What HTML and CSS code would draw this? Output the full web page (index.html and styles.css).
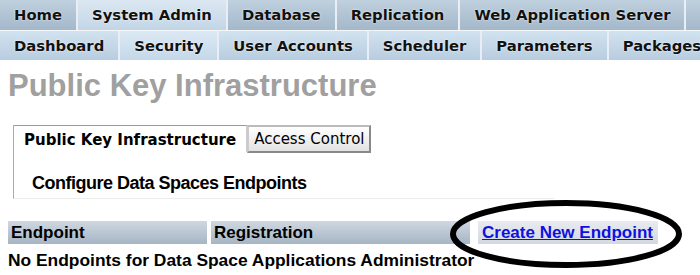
FILE: index.html
```html
<!DOCTYPE html>
<html lang="en">
<head>
  <meta charset="UTF-8">
  <title>Public Key Infrastructure</title>
  <link rel="stylesheet" href="styles.css">
</head>
<body>
  <div class="nav nav-main">
    <div class="tab">Home</div>
    <div class="tab active">System Admin</div>
    <div class="tab">Database</div>
    <div class="tab">Replication</div>
    <div class="tab">Web Application Server</div>
    <div class="tab tab-more"></div>
  </div>
  <div class="nav nav-sub">
    <div class="tab">Dashboard</div>
    <div class="tab active">Security</div>
    <div class="tab">User Accounts</div>
    <div class="tab">Scheduler</div>
    <div class="tab">Parameters</div>
    <div class="tab">Packages</div>
  </div>

  <div class="content">
    <h1 class="page-title">Public Key Infrastructure</h1>

    <div class="panel">
      <div class="panel-tabs">
        <div class="ptab ptab-on">Public Key Infrastructure</div>
        <div class="ptab ptab-off">Access Control</div>
      </div>
      <div class="panel-body">Configure Data Spaces Endpoints</div>
    </div>

    <div class="grid-head">
      <div class="col col-endpoint">Endpoint</div>
      <div class="col col-reg">Registration</div>
      <div class="col col-action"><a href="#">Create New Endpoint</a></div>
      <!-- hand-drawn marker around the link -->
      <svg class="circle" width="236" height="70" viewBox="0 0 236 70">
        <ellipse cx="118" cy="35" rx="113" ry="31" fill="none" stroke="#000" stroke-width="6"/>
      </svg>
    </div>
    <div class="empty">No Endpoints for Data Space Applications Administrator</div>
  </div>
</body>
</html>
```

FILE: styles.css
```css
body {
  margin: 0;
  background: #fff;
  font-family: "Liberation Sans", Arial, sans-serif;
  overflow: hidden;
}
.nav {
  display: flex;
  gap: 2px;
  white-space: nowrap;
  overflow: hidden;
  background: #e8eef3;
}
.tab {
  font-family: "DejaVu Sans", Verdana, sans-serif;
  font-weight: bold;
  font-size: 14.8px;
  color: #111;
  padding: 0 14px;
  text-shadow: 0 0 2px #fff;
  flex-shrink: 0;
}
.nav-main .tab {
  height: 30px;
  line-height: 30px;
  background: linear-gradient(#bfd0de, #a3b8ca);
}
.nav-main .tab.active {
  background: linear-gradient(#dbe7f1, #c3d6e6);
}
.nav-main .tab-more {
  width: 40px;
}
.nav-sub {
  border-top: 1px solid #f4f7fa;
}
.nav-sub .tab {
  height: 29px;
  line-height: 29px;
  background: linear-gradient(#d2e2ef, #b7cde0);
}
.nav-sub .tab.active {
  background: linear-gradient(#dce9f4, #c4d8e9);
}
.content {
  padding: 0 8px;
}
.page-title {
  margin: 8px 0 0;
  font-size: 31px;
  font-weight: bold;
  color: #a0a0a0;
  height: 40px;
  line-height: 36px;
}
.panel {
  margin: 17px 0 0 5px;
  width: 540px;
  border-left: 1px solid #aaa;
  border-bottom: 1px solid #ececec;
  height: 73px;
}
.panel-tabs {
  display: flex;
  align-items: flex-start;
}
.ptab {
  font-family: "DejaVu Sans", Verdana, sans-serif;
  font-size: 15px;
  color: #000;
}
.ptab-on {
  font-weight: bold;
  padding: 5px 10px 0 10px;
  height: 21px;
  border-top: 1px solid #999;
  border-right: 1px solid #ccc;
}
.ptab-off {
  padding: 3px 5px 0 5px;
  height: 21px;
  border: 2px solid #999;
  border-color: #bbb #888 #888 #ccc;
  background: linear-gradient(#fff, #e2e2e2);
}
.panel-body {
  padding: 20px 0 0 18px;
  font-size: 18px;
  font-weight: bold;
  letter-spacing: -0.5px;
  color: #000;
}
.grid-head {
  position: relative;
  display: flex;
  margin-top: 22px;
  height: 23px;
}
.col {
  font-size: 17px;
  font-weight: bold;
  line-height: 23px;
  color: #000;
  background: linear-gradient(#cfd8e1, #a6b5c4);
  padding-left: 3px;
}
.col-endpoint {
  width: 196px;
}
.col-reg {
  width: 256px;
  margin-left: 4px;
}
.col-action {
  margin-left: 8px;
  padding: 0 5px 0 4px;
  background: linear-gradient(#e8ebef, #d3d9e0);
}
.col-action a {
  color: #1010e0;
}
.circle {
  position: absolute;
  left: 440px;
  top: -22px;
}
.empty {
  margin-top: 6px;
  font-size: 17.4px;
  font-weight: bold;
  color: #000;
}
```
